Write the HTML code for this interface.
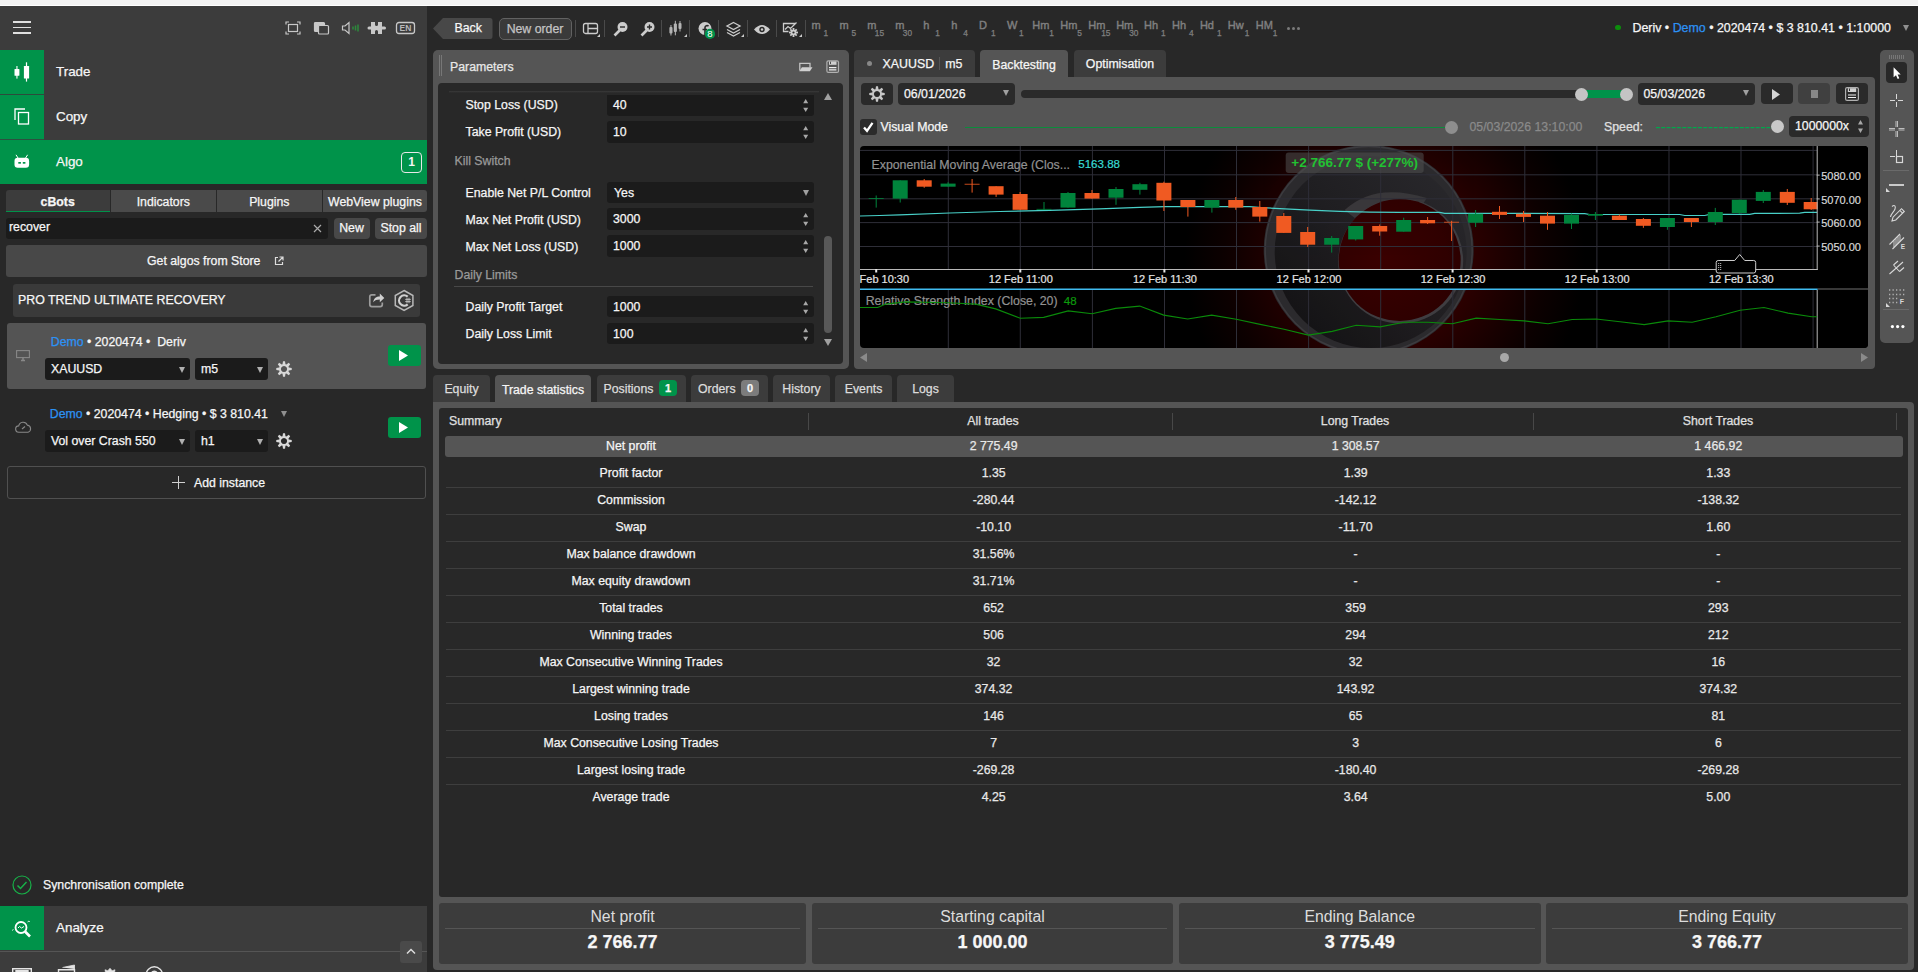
<!DOCTYPE html><html><head><meta charset="utf-8"><title>cTrader</title><style>
*{box-sizing:border-box;margin:0;padding:0}
html,body{width:1918px;height:972px;overflow:hidden;background:#282828}
body{position:relative;font-family:"Liberation Sans",Arial,sans-serif;font-size:12px;color:#f6f6f6;-webkit-font-smoothing:antialiased}
.a{position:absolute}
.t{position:absolute;white-space:nowrap;line-height:16px;height:16px;-webkit-text-stroke:.25px}
.c{text-align:center}
.b{font-weight:bold}
.g{color:#9a9a9a}
.blue{color:#2c92f4}
svg{position:absolute;overflow:visible}
.inp{position:absolute;background:#1b1b1b;border-radius:3px}
.btn{position:absolute;background:#3c3c3c;border-radius:3px}
.row{position:absolute;left:445px;width:1455px;height:27px;border-bottom:1px solid #404040}
</style></head><body>
<div class="a" style="left:0px;top:0px;width:1918px;height:5px;background:#f3f3f3;"></div>
<div class="a" style="left:0px;top:5px;width:1918px;height:1px;background:#ffffff;"></div>
<div class="a" style="left:0px;top:6px;width:427px;height:178px;background:#3c3c3c;"></div>
<div class="a" style="left:13px;top:21.25px;width:18px;height:1.5px;background:#e0e0e0;"></div>
<div class="a" style="left:13px;top:26.75px;width:18px;height:1.5px;background:#e0e0e0;"></div>
<div class="a" style="left:13px;top:32.25px;width:18px;height:1.5px;background:#e0e0e0;"></div>
<svg style="left:285px;top:21px" width="132" height="14" viewBox="0 0 132 14" fill="none" stroke="#c8c8c8" stroke-width="1.2">
<rect x="3.5" y="3.5" width="9" height="7"/><path d="M1 3.5V1h3M12 1h3v2.5M1 10.500V13h3M12 13h3v-2.500"/>
<rect x="29.500" y="1.500" width="10" height="9" rx="1" fill="#c8c8c8"/><rect x="33.500" y="4.500" width="10" height="8.500" rx="1" fill="#3c3c3c"/>
<path d="M57.500 5v4h2.500l4 3.500v-11l-4 3.500z"/>
<path d="M68 5.500v3M70.500 4.500v5M73 3.500v7" stroke="#2c8a3c" stroke-width="1.500"/>
<path d="M86 1h4v2.500a1.500 1.500 0 0 0 3 0V1h4v4.500h2.500a1.500 1.500 0 0 1 0 3H97V13h-4v-2.500a1.500 1.500 0 0 0 -3 0V13h-4V8.500h-2a1.500 1.500 0 0 1 0 -3h2z" fill="#c8c8c8" stroke="none"/>
<rect x="111.500" y="1.500" width="18" height="11" rx="2.500" stroke-width="1.300"/>
<text x="120.500" y="10.300" font-size="8.500" font-weight="bold" fill="#b8b8b8" stroke="none" text-anchor="middle" font-family="Liberation Sans, sans-serif">EN</text>
</svg>
<div class="a" style="left:0px;top:50px;width:44px;height:44px;background:#00934a;"></div>
<svg style="left:0px;top:50px" width="44" height="44" viewBox="0 50 44 44" fill="#fff"><rect x="14.500" y="69" width="4.900" height="6.700" rx=".5"/><rect x="16.400" y="66" width="1.100" height="12.600"/><rect x="23.900" y="66" width="5.200" height="12.600" rx=".5"/><rect x="25.900" y="62.300" width="1.200" height="19.300"/></svg>
<div class="t " style="left:56px;top:63.8px;font-size:13.400px">Trade</div>
<div class="a" style="left:0px;top:94px;width:44px;height:1px;background:#2d4a3c;"></div>
<div class="a" style="left:0px;top:95px;width:44px;height:44px;background:#00934a;"></div>
<svg style="left:14px;top:108px" width="16" height="17" viewBox="0 0 16 17" fill="none" stroke="#fff" stroke-width="1.300"><rect x="4.500" y="4.500" width="10" height="11.500"/><path d="M1 12V1h10"/></svg>
<div class="t " style="left:56px;top:108.8px;font-size:13.400px">Copy</div>
<div class="a" style="left:0px;top:139px;width:44px;height:1px;background:#2d5040;"></div>
<div class="a" style="left:0px;top:140px;width:427px;height:44px;background:#00934a;"></div>
<svg style="left:0px;top:140px" width="44" height="44" viewBox="0 140 44 44" fill="#fff"><rect x="14.500" y="157.800" width="14.600" height="9.900" rx="3.200"/><path d="M16 154.800l2 3.200M27.600 154.800l-2 3.200" stroke="#fff" stroke-width="1" fill="none"/><rect x="18.300" y="162" width="2.600" height="1.700" fill="#00934a"/><rect x="22.800" y="162" width="2.600" height="1.700" fill="#00934a"/></svg>
<div class="t " style="left:56px;top:153.8px;font-size:13.400px">Algo</div>
<div class="a c b" style="left:401px;top:152px;width:21px;height:21px;border:1.500px solid #e8e8e8;border-radius:4px;font-size:12px;line-height:18px">1</div>
<div class="a" style="left:5.5px;top:190.4px;width:104.3px;height:21.6px;background:#3c3c3c;border-radius:3px 0 0 0;"></div>
<div class="t c b" style="left:5.5px;top:193.5px;width:104.3px;font-size:12.300px;">cBots</div>
<div class="a" style="left:110.8px;top:190.4px;width:105px;height:21.6px;background:#4a4a4a;border-radius:0;"></div>
<div class="t c" style="left:110.8px;top:193.5px;width:105px;font-size:12.300px;">Indicators</div>
<div class="a" style="left:216.8px;top:190.4px;width:105px;height:21.6px;background:#4a4a4a;border-radius:0;"></div>
<div class="t c" style="left:216.8px;top:193.5px;width:105px;font-size:12.300px;">Plugins</div>
<div class="a" style="left:322.8px;top:190.4px;width:104.4px;height:21.6px;background:#4a4a4a;border-radius:0 3px 3px 0;"></div>
<div class="t c" style="left:322.8px;top:193.5px;width:104.4px;font-size:12.300px;">WebView plugins</div>
<div class="a" style="left:5.5px;top:210.5px;width:104px;height:1.5px;background:#00934a;"></div>
<div class="inp" style="left:6px;top:218px;width:322px;height:20.700px"></div>
<div class="t " style="left:9px;top:219px;font-size:12.300px">recover</div>
<svg style="left:313px;top:224px" width="9" height="9" viewBox="0 0 9 9" stroke="#aaa" stroke-width="1.200"><path d="M1 1l7 7M8 1l-7 7"/></svg>
<div class="btn" style="left:334px;top:217.500px;width:35.500px;height:21.500px;background:#484848;border-radius:4px"></div>
<div class="t c" style="left:334px;top:220px;width:35px;font-size:12.300px">New</div>
<div class="btn" style="left:375px;top:217.500px;width:52px;height:21.500px;background:#484848;border-radius:4px"></div>
<div class="t c" style="left:375px;top:220px;width:52px;font-size:12.300px">Stop all</div>
<div class="btn" style="left:6px;top:245px;width:421px;height:32px;background:#484848"></div>
<div class="t " style="left:147px;top:252.5px;font-size:12.300px;">Get algos from Store</div>
<svg style="left:274px;top:256px" width="10" height="10" viewBox="0 0 10 10" fill="none" stroke="#ddd" stroke-width="1.200"><path d="M4 1.500H1.500v7h7V6M5.500 1h3.500v3.500M9 1L4.500 5.500"/></svg>
<div class="btn" style="left:13px;top:284px;width:407px;height:32.500px;background:#3a3a3a"></div>
<div class="t " style="left:18px;top:291.5px;font-size:12.350px">PRO TREND ULTIMATE RECOVERY</div>
<svg style="left:360px;top:285px" width="60" height="32" viewBox="360 285 60 32" fill="none" stroke="#c8c8c8" stroke-width="1.300"><path d="M375.500 294.800H371.800a2 2 0 0 0 -2 2v7.800a2 2 0 0 0 2 2h8.500a2 2 0 0 0 2 -2V302.500" stroke="#9c9c9c" stroke-width="1.700"/><path d="M373.200 302.200c.8-4.200 3-5.800 6.600-5.800v-2.900l4.500 4.400l-4.500 4.400v-2.900c-3 0-5 .6-6.600 2.800z" fill="#d0d0d0" stroke="none"/>
<path d="M404.100 290.500l8.800 5v10l-8.800 5l-8.800-5v-10z" stroke-width="1.500" stroke="#b8b8b8"/><path d="M407.700 296.600a5.200 5.200 0 1 0 0 7.800" stroke-width="2.200" stroke="#d0d0d0"/><path d="M405.200 299.400h5.600M405.200 301.600h5.600M407 297.800v5.400M409 297.800v5.400" stroke-width=".8" stroke="#d0d0d0"/></svg>
<div class="btn" style="left:7px;top:322.500px;width:419px;height:66px;background:#545454"></div>
<svg style="left:16px;top:350px" width="14" height="11" viewBox="0 0 14 11" fill="none" stroke="#888" stroke-width="1.100"><rect x=".6" y=".6" width="12.800" height="7"/><path d="M5 10.500h4M7 7.500v3" stroke-width="1.500"/></svg>
<div class="t " style="left:50.8px;top:333.5px;font-size:12.300px"><span class="blue">Demo</span> • 2020474 •&nbsp; Deriv</div>
<div class="inp" style="left:45px;top:358px;width:145px;height:22px"></div>
<div class="t " style="left:51px;top:361.3px;font-size:12.300px">XAUUSD</div>
<svg style="left:179px;top:366.5px" width="6" height="6" viewBox="0 0 6 6"><path d="M0 0h6L3 6z" fill="#b0b0b0"/></svg>
<div class="inp" style="left:195px;top:358px;width:73px;height:22px"></div>
<div class="t " style="left:201px;top:361.3px;font-size:12.300px">m5</div>
<svg style="left:257px;top:366.5px" width="6" height="6" viewBox="0 0 6 6"><path d="M0 0h6L3 6z" fill="#b0b0b0"/></svg>
<svg style="left:276px;top:361px" width="16" height="16" viewBox="-8 -8 16 16"><path fill-rule="evenodd" fill="#d8d8d8" d="M-1.48 -4.78L-1.01 -7.73L1.01 -7.73L1.48 -4.78L2.33 -4.42L4.75 -6.18L6.18 -4.75L4.42 -2.33L4.78 -1.48L7.73 -1.01L7.73 1.01L4.78 1.48L4.42 2.33L6.18 4.75L4.75 6.18L2.33 4.42L1.48 4.78L1.01 7.73L-1.01 7.73L-1.48 4.78L-2.33 4.42L-4.75 6.18L-6.18 4.75L-4.42 2.33L-4.78 1.48L-7.73 1.01L-7.73 -1.01L-4.78 -1.48L-4.42 -2.33L-6.18 -4.75L-4.75 -6.18L-2.33 -4.42zM0 -3.100a3.100 3.100 0 1 0 .01 0z"/></svg>
<div class="a" style="left:388px;top:345px;width:33px;height:21px;background:#00934a;border-radius:3px"></div>
<svg style="left:399px;top:350px" width="9" height="11" viewBox="0 0 9 11"><path d="M0 0l9 5.500L0 11z" fill="#fff"/></svg>
<svg style="left:15px;top:422px" width="17" height="11" viewBox="0 0 17 11" fill="none" stroke="#888" stroke-width="1.100"><path d="M4 10.300a3.200 3.200 0 0 1 -.3-6.400a4.500 4.500 0 0 1 8.600-.8a3.700 3.700 0 0 1 .7 7.200z"/><path d="M7 7l3-2.500"/></svg>
<div class="t " style="left:49.8px;top:405.5px;font-size:12.300px"><span class="blue">Demo</span> • 2020474 • Hedging • $ 3 810.41</div>
<svg style="left:281px;top:411px" width="6" height="6" viewBox="0 0 6 6"><path d="M0 0h6L3 6z" fill="#909090"/></svg>
<div class="inp" style="left:45px;top:430px;width:145px;height:22px"></div>
<div class="t " style="left:51px;top:433.3px;font-size:12.300px">Vol over Crash 550</div>
<svg style="left:179px;top:438.5px" width="6" height="6" viewBox="0 0 6 6"><path d="M0 0h6L3 6z" fill="#b0b0b0"/></svg>
<div class="inp" style="left:195px;top:430px;width:73px;height:22px"></div>
<div class="t " style="left:201px;top:433.3px;font-size:12.300px">h1</div>
<svg style="left:257px;top:438.5px" width="6" height="6" viewBox="0 0 6 6"><path d="M0 0h6L3 6z" fill="#b0b0b0"/></svg>
<svg style="left:276px;top:433px" width="16" height="16" viewBox="-8 -8 16 16"><path fill-rule="evenodd" fill="#d8d8d8" d="M-1.48 -4.78L-1.01 -7.73L1.01 -7.73L1.48 -4.78L2.33 -4.42L4.75 -6.18L6.18 -4.75L4.42 -2.33L4.78 -1.48L7.73 -1.01L7.73 1.01L4.78 1.48L4.42 2.33L6.18 4.75L4.75 6.18L2.33 4.42L1.48 4.78L1.01 7.73L-1.01 7.73L-1.48 4.78L-2.33 4.42L-4.75 6.18L-6.18 4.75L-4.42 2.33L-4.78 1.48L-7.73 1.01L-7.73 -1.01L-4.78 -1.48L-4.42 -2.33L-6.18 -4.75L-4.75 -6.18L-2.33 -4.42zM0 -3.100a3.100 3.100 0 1 0 .01 0z"/></svg>
<div class="a" style="left:388px;top:417px;width:33px;height:21px;background:#00934a;border-radius:3px"></div>
<svg style="left:399px;top:422px" width="9" height="11" viewBox="0 0 9 11"><path d="M0 0l9 5.500L0 11z" fill="#fff"/></svg>
<div class="a" style="left:7px;top:466px;width:419px;height:33px;border:1px solid #505050;border-radius:3px"></div>
<svg style="left:172px;top:476px" width="13" height="13" viewBox="0 0 13 13" stroke="#d0d0d0" stroke-width="1"><path d="M6.500 0v13M0 6.500h13"/></svg>
<div class="t " style="left:194px;top:474.5px;font-size:12.300px">Add instance</div>
<svg style="left:12px;top:875px" width="20" height="20" viewBox="0 0 20 20" fill="none" stroke="#18b048" stroke-width="1.200"><circle cx="10" cy="10" r="9"/><path d="M5.500 10.500l3 3l6-6.500" stroke-width="1.500"/></svg>
<div class="t " style="left:43px;top:876.5px;font-size:12.300px">Synchronisation complete</div>
<div class="a" style="left:0px;top:906px;width:427px;height:66px;background:#3c3c3c;"></div>
<div class="a" style="left:0px;top:906px;width:44px;height:44px;background:#00934a;"></div>
<svg style="left:11px;top:920px" width="22" height="18" viewBox="0 0 22 18" fill="none" stroke="#fff" stroke-width="1.800"><circle cx="10" cy="7.500" r="5.500"/><path d="M14 11.500l5 5" stroke-width="2.600"/><path d="M7 8l1.500-1.500l2 1.500l2.500-1.500" stroke-width="1"/><path d="M1 10.500l1.500-1M16.500 2l1.500-1l.7 1" stroke-width=".8"/></svg>
<div class="t " style="left:56px;top:920px;font-size:13.400px">Analyze</div>
<div class="a" style="left:0px;top:951px;width:427px;height:1px;background:#555;"></div>
<div class="a" style="left:400px;top:941px;width:22px;height:22px;background:#4a4a4a;border-radius:3px"></div>
<svg style="left:406px;top:948px" width="10" height="6" viewBox="0 0 10 6" fill="none" stroke="#ddd" stroke-width="1.500"><path d="M1 5.500l4-4l4 4"/></svg>
<svg style="left:0px;top:960px" width="200" height="12" viewBox="0 960 200 12" fill="none" stroke="#e4e4e4" stroke-width="1.400"><path d="M12.700 973v-4.200h18.600v4.200"/><path d="M16 973v-2.300h12v2.300" fill="#e4e4e4"/><path d="M58.500 973v-3.300h16v3.300"/><path d="M62.500 967.500l12-2.500v4" fill="#e4e4e4" stroke-width=".8"/><path d="M105.500 973l-.5-3.300l2.800 1l2.200-2.500l2.200 2.500l2.800-1l-.5 3.300" fill="#e4e4e4" stroke-width=".6"/><circle cx="154.300" cy="975" r="8.200"/><circle cx="154.300" cy="974" r="2.800"/></svg>
<svg style="left:433px;top:18px" width="60" height="21" viewBox="0 0 60 21"><path d="M0 10.500L10 0h47a2.500 2.500 0 0 1 2.500 2.500v16a2.500 2.500 0 0 1 -2.500 2.500H10z" fill="#484848"/></svg>
<div class="t " style="left:454.5px;top:19.8px;font-size:12.350px">Back</div>
<div class="a" style="left:499.200px;top:17.600px;width:72.600px;height:22.200px;background:#3a3a3a;border:1.300px solid #626262;border-radius:5px"></div>
<div class="t c" style="left:499px;top:20.5px;width:72px;font-size:12.300px;color:#c4c4c4">New order</div>
<div class="a" style="left:575px;top:20px;width:1px;height:17px;background:#4a4a4a;"></div>
<div class="a" style="left:604px;top:20px;width:1px;height:17px;background:#4a4a4a;"></div>
<div class="a" style="left:661px;top:20px;width:1px;height:17px;background:#4a4a4a;"></div>
<div class="a" style="left:689px;top:20px;width:1px;height:17px;background:#4a4a4a;"></div>
<div class="a" style="left:718px;top:20px;width:1px;height:17px;background:#4a4a4a;"></div>
<div class="a" style="left:747px;top:20px;width:1px;height:17px;background:#4a4a4a;"></div>
<div class="a" style="left:776px;top:20px;width:1px;height:17px;background:#4a4a4a;"></div>
<div class="a" style="left:805px;top:20px;width:1px;height:17px;background:#4a4a4a;"></div>
<svg style="left:582px;top:19.800px" width="230" height="20" viewBox="0 0 230 20" fill="none" stroke="#cccccc" stroke-width="1.300">
<rect x="1.500" y="3.500" width="14" height="10" rx="2"/><path d="M6 3.500v10M6 8.500h9.500"/><path d="M18 14v3h-3z" fill="#cccccc" stroke="none"/>
<circle cx="40.500" cy="7" r="5" fill="#cccccc" stroke="none"/><path d="M37.500 10.500l-5 5" stroke-width="2.600"/><path d="M38 7h5" stroke="#282828" stroke-width="1.400"/>
<circle cx="67.500" cy="7" r="5" fill="#cccccc" stroke="none"/><path d="M64.500 10.500l-5 5" stroke-width="2.600"/><path d="M65 7h5M67.500 4.500v5" stroke="#282828" stroke-width="1.400"/>
<g fill="#cccccc" stroke="none"><g fill="#b4b4b4"><rect x="87.400" y="7" width="3.100" height="6.500" rx="1"/><rect x="88.450" y="5" width="1" height="10.500"/><rect x="91.800" y="3.500" width="3.100" height="8.500" rx="1"/><rect x="92.850" y="0.800" width="1" height="14.500"/><rect x="96.500" y="3" width="3" height="6" rx="1"/><rect x="97.500" y="1" width="1" height="10.500"/></g><path d="M105 14v3h-3z"/></g>
<circle cx="123" cy="8.500" r="6.500" fill="#cccccc" stroke="none"/><path d="M123 15v-7.500a2 2 0 0 1 3.500 -1.300M120.500 9.500h4.500" stroke="#282828" stroke-width="1.600"/>
<circle cx="128" cy="13.900" r="5.100" fill="#00934a" stroke="none"/>
<text x="128" y="17.200" font-size="9.500" fill="#fff" stroke="none" text-anchor="middle" font-family="Liberation Sans, sans-serif">8</text>
<path d="M151.500 2.500l6.500 3.500l-6.500 3.500l-6.500-3.500zM145 9.500l6.500 3.500l6.500-3.500M145 12.500l6.500 3.500l6.500-3.500"/><path d="M162 14v3h-3z" fill="#cccccc" stroke="none"/>
<path d="M172 9.500q8-9 16 0q-8 9-16 0z" fill="#cccccc" stroke="none"/><circle cx="180" cy="9.500" r="2.700" fill="#282828" stroke="none"/><circle cx="180" cy="9.500" r="1.200" fill="#cccccc" stroke="none"/>
<path d="M213 3.500h-11.500v8h5M203 9.500l3-3l2.500 2l6-6" /><g transform="translate(211.500,12.500)" fill="#cccccc" stroke="none"><rect x="-0.900" y="-4.500" width="1.800" height="2.500" transform="rotate(0)"/><rect x="-0.900" y="-4.500" width="1.800" height="2.500" transform="rotate(45)"/><rect x="-0.900" y="-4.500" width="1.800" height="2.500" transform="rotate(90)"/><rect x="-0.900" y="-4.500" width="1.800" height="2.500" transform="rotate(135)"/><rect x="-0.900" y="-4.500" width="1.800" height="2.500" transform="rotate(180)"/><rect x="-0.900" y="-4.500" width="1.800" height="2.500" transform="rotate(225)"/><rect x="-0.900" y="-4.500" width="1.800" height="2.500" transform="rotate(270)"/><rect x="-0.900" y="-4.500" width="1.800" height="2.500" transform="rotate(315)"/><circle r="2.800"/><circle r="1.100" fill="#282828"/></g><path d="M220 14v3h-3z" fill="#cccccc" stroke="none"/>
</svg>
<div class="t" style="left:811.5px;top:17.300px;color:#808080;font-size:11px;-webkit-text-stroke:.4px">m</div>
<div class="t" style="left:823.5px;top:24.500px;color:#808080;font-size:8.300px">1</div>
<div class="t" style="left:839.43px;top:17.300px;color:#808080;font-size:11px;-webkit-text-stroke:.4px">m</div>
<div class="t" style="left:851.43px;top:24.500px;color:#808080;font-size:8.300px">5</div>
<div class="t" style="left:867.36px;top:17.300px;color:#808080;font-size:11px;-webkit-text-stroke:.4px">m</div>
<div class="t" style="left:874.86px;top:24.500px;color:#808080;font-size:8.300px">15</div>
<div class="t" style="left:895.29px;top:17.300px;color:#808080;font-size:11px;-webkit-text-stroke:.4px">m</div>
<div class="t" style="left:902.79px;top:24.500px;color:#808080;font-size:8.300px">30</div>
<div class="t" style="left:923.22px;top:17.300px;color:#808080;font-size:11px;-webkit-text-stroke:.4px">h</div>
<div class="t" style="left:935.22px;top:24.500px;color:#808080;font-size:8.300px">1</div>
<div class="t" style="left:951.15px;top:17.300px;color:#808080;font-size:11px;-webkit-text-stroke:.4px">h</div>
<div class="t" style="left:963.15px;top:24.500px;color:#808080;font-size:8.300px">4</div>
<div class="t" style="left:979.0799999999999px;top:17.300px;color:#808080;font-size:11px;-webkit-text-stroke:.4px">D</div>
<div class="t" style="left:991.0799999999999px;top:24.500px;color:#808080;font-size:8.300px">1</div>
<div class="t" style="left:1007.01px;top:17.300px;color:#808080;font-size:11px;-webkit-text-stroke:.4px">W</div>
<div class="t" style="left:1019.01px;top:24.500px;color:#808080;font-size:8.300px">1</div>
<div class="t" style="left:1032.3400000000001px;top:17.300px;color:#808080;font-size:11px;-webkit-text-stroke:.4px">Hm</div>
<div class="t" style="left:1049.3400000000001px;top:24.500px;color:#808080;font-size:8.300px">1</div>
<div class="t" style="left:1060.27px;top:17.300px;color:#808080;font-size:11px;-webkit-text-stroke:.4px">Hm</div>
<div class="t" style="left:1077.27px;top:24.500px;color:#808080;font-size:8.300px">5</div>
<div class="t" style="left:1088.2px;top:17.300px;color:#808080;font-size:11px;-webkit-text-stroke:.4px">Hm</div>
<div class="t" style="left:1101.2px;top:24.500px;color:#808080;font-size:8.300px">15</div>
<div class="t" style="left:1116.13px;top:17.300px;color:#808080;font-size:11px;-webkit-text-stroke:.4px">Hm</div>
<div class="t" style="left:1129.13px;top:24.500px;color:#808080;font-size:8.300px">30</div>
<div class="t" style="left:1144.06px;top:17.300px;color:#808080;font-size:11px;-webkit-text-stroke:.4px">Hh</div>
<div class="t" style="left:1161.06px;top:24.500px;color:#808080;font-size:8.300px">1</div>
<div class="t" style="left:1171.99px;top:17.300px;color:#808080;font-size:11px;-webkit-text-stroke:.4px">Hh</div>
<div class="t" style="left:1188.99px;top:24.500px;color:#808080;font-size:8.300px">4</div>
<div class="t" style="left:1199.92px;top:17.300px;color:#808080;font-size:11px;-webkit-text-stroke:.4px">Hd</div>
<div class="t" style="left:1216.92px;top:24.500px;color:#808080;font-size:8.300px">1</div>
<div class="t" style="left:1227.8500000000001px;top:17.300px;color:#808080;font-size:11px;-webkit-text-stroke:.4px">Hw</div>
<div class="t" style="left:1244.8500000000001px;top:24.500px;color:#808080;font-size:8.300px">1</div>
<div class="t" style="left:1255.7800000000002px;top:17.300px;color:#808080;font-size:11px;-webkit-text-stroke:.4px">HM</div>
<div class="t" style="left:1272.7800000000002px;top:24.500px;color:#808080;font-size:8.300px">1</div>
<div class="a" style="left:1287px;top:27px;width:2.5px;height:2.5px;background:#7a7a7a;border-radius:2px;"></div>
<div class="a" style="left:1292px;top:27px;width:2.5px;height:2.5px;background:#7a7a7a;border-radius:2px;"></div>
<div class="a" style="left:1297px;top:27px;width:2.5px;height:2.5px;background:#7a7a7a;border-radius:2px;"></div>
<div class="a" style="left:1615.3px;top:24.5px;width:5.8px;height:5.8px;background:#0c8c0c;border-radius:3px;"></div>
<div class="t " style="left:1632.5px;top:20px;font-size:12.400px">Deriv • <span class="blue">Demo</span> • 2020474 • $ 3 810.41 • 1:10000</div>
<svg style="left:1903px;top:25px" width="6" height="6" viewBox="0 0 6 6"><path d="M0 0h6L3 6z" fill="#909090"/></svg>
<div class="a" style="left:433px;top:50px;width:416px;height:319px;background:#555;border-radius:5px;"></div>
<div class="a" style="left:438.3px;top:82.6px;width:404.7px;height:281.4px;background:#282828;border-radius:4px;"></div>
<div class="a" style="left:439px;top:55px;width:1px;height:21px;background:#777;"></div>
<div class="a" style="left:441px;top:55px;width:1px;height:21px;background:#777;"></div>
<div class="t " style="left:450px;top:58.5px;font-size:12.300px;color:#e8e8e8">Parameters</div>
<svg style="left:790px;top:55px" width="55" height="22" viewBox="790 55 55 22" fill="none" stroke="#c4c4c4" stroke-width="1.300"><path d="M799.800 70.500V63.400h10.200v4"/><path d="M799.300 71.300l2.600-4.100h10.600l-2.600 4.100z" fill="#d0d0d0" stroke="none"/>
<rect x="826.900" y="60.800" width="11.600" height="11.600" rx="1.500" stroke="#b0b0b0" stroke-width="1.200"/><rect x="829" y="61.400" width="7.500" height="3.400" fill="#d0d0d0" stroke="none"/><rect x="830" y="61.700" width=".9" height="2.300" fill="#444" stroke="none"/><path d="M829 67.600h7.400M829 69.900h7.400" stroke="#ececec" stroke-width="1.100"/></svg>
<div class="a" style="left:449px;top:91px;width:370px;height:2px;background:linear-gradient(#3a3a3a,#282828)"></div>
<div class="t " style="left:465.5px;top:96.5px;font-size:12.300px">Stop Loss (USD)</div>
<div class="inp" style="left:607px;top:94.5px;width:207px;height:21.0px;border-radius:0 0 3px 3px;"></div>
<div class="t " style="left:613px;top:97.25px;font-size:12.300px">40</div>
<svg style="left:802.8px;top:99.05px" width="5.400" height="13" viewBox="0 0 5 13" fill="#a8a8a8"><path d="M0 4.300h5L2.500 0zM0 8.700h5L2.500 13z"/></svg>
<div class="t " style="left:465.5px;top:123.5px;font-size:12.300px">Take Profit (USD)</div>
<div class="inp" style="left:607px;top:121px;width:207px;height:21.5px;"></div>
<div class="t " style="left:613px;top:124.25px;font-size:12.300px">10</div>
<svg style="left:802.8px;top:126.05px" width="5.400" height="13" viewBox="0 0 5 13" fill="#a8a8a8"><path d="M0 4.300h5L2.500 0zM0 8.700h5L2.500 13z"/></svg>
<div class="t g" style="left:454.5px;top:152.5px;font-size:12.300px">Kill Switch</div>
<div class="t " style="left:465.5px;top:184.5px;font-size:12.300px">Enable Net P/L Control</div>
<div class="inp" style="left:607px;top:182px;width:207px;height:21px"></div>
<div class="t " style="left:614px;top:184.5px;font-size:12.300px">Yes</div>
<svg style="left:803px;top:189.5px" width="6" height="6" viewBox="0 0 6 6"><path d="M0 0h6L3 6z" fill="#a0a0a0"/></svg>
<div class="t " style="left:465.5px;top:211.5px;font-size:12.300px">Max Net Profit (USD)</div>
<div class="inp" style="left:607px;top:208px;width:207px;height:21.5px;"></div>
<div class="t " style="left:613px;top:211.25px;font-size:12.300px">3000</div>
<svg style="left:802.8px;top:213.05px" width="5.400" height="13" viewBox="0 0 5 13" fill="#a8a8a8"><path d="M0 4.300h5L2.500 0zM0 8.700h5L2.500 13z"/></svg>
<div class="t " style="left:465.5px;top:238.5px;font-size:12.300px">Max Net Loss (USD)</div>
<div class="inp" style="left:607px;top:235px;width:207px;height:21.5px;"></div>
<div class="t " style="left:613px;top:238.25px;font-size:12.300px">1000</div>
<svg style="left:802.8px;top:240.05px" width="5.400" height="13" viewBox="0 0 5 13" fill="#a8a8a8"><path d="M0 4.300h5L2.500 0zM0 8.700h5L2.500 13z"/></svg>
<div class="t g" style="left:454.5px;top:266.5px;font-size:12.300px">Daily Limits</div>
<div class="a" style="left:454px;top:286px;width:359px;height:1px;background:#484848;"></div>
<div class="t " style="left:465.5px;top:298.5px;font-size:12.300px">Daily Profit Target</div>
<div class="inp" style="left:607px;top:296px;width:207px;height:21px;"></div>
<div class="t " style="left:613px;top:299.0px;font-size:12.300px">1000</div>
<svg style="left:802.8px;top:300.8px" width="5.400" height="13" viewBox="0 0 5 13" fill="#a8a8a8"><path d="M0 4.300h5L2.500 0zM0 8.700h5L2.500 13z"/></svg>
<div class="t " style="left:465.5px;top:325.5px;font-size:12.300px">Daily Loss Limit</div>
<div class="inp" style="left:607px;top:323px;width:207px;height:21px;"></div>
<div class="t " style="left:613px;top:326.0px;font-size:12.300px">100</div>
<svg style="left:802.8px;top:327.8px" width="5.400" height="13" viewBox="0 0 5 13" fill="#a8a8a8"><path d="M0 4.300h5L2.500 0zM0 8.700h5L2.500 13z"/></svg>
<svg style="left:824px;top:93px" width="8" height="7" viewBox="0 0 8 7"><path d="M0 7h8L4 0z" fill="#a0a0a0"/></svg>
<svg style="left:824px;top:339px" width="8" height="7" viewBox="0 0 8 7"><path d="M0 0h8L4 7z" fill="#a0a0a0"/></svg>
<div class="a" style="left:824px;top:235.5px;width:8px;height:97px;background:#585858;border-radius:4px;"></div>
<div class="a" style="left:854px;top:50px;width:121px;height:28px;background:#3c3c3c;border-radius:4px 4px 0 0;"></div>
<div class="a" style="left:867px;top:61px;width:5px;height:5px;background:#888;border-radius:3px;"></div>
<div class="t " style="left:882.5px;top:55.5px;font-size:12.400px">XAUUSD</div>
<div class="a" style="left:939px;top:57px;width:1px;height:13px;background:#555;"></div>
<div class="t " style="left:945.3px;top:55.5px;font-size:12.400px">m5</div>
<div class="a" style="left:980px;top:50px;width:88px;height:28px;background:#555;border-radius:4px 4px 0 0;"></div>
<div class="t c" style="left:980px;top:56.5px;width:88px;font-size:12.300px">Backtesting</div>
<div class="a" style="left:1074px;top:50px;width:92px;height:28px;background:#3c3c3c;border-radius:4px 4px 0 0;"></div>
<div class="t c" style="left:1074px;top:55.5px;width:92px;font-size:12.300px">Optimisation</div>
<div class="a" style="left:854px;top:77px;width:1021px;height:292px;background:#555;border-radius:0 4px 4px 4px;"></div>
<div class="btn" style="left:860.500px;top:83.300px;width:32.300px;height:21.300px;background:#2a2a2a;border-radius:4px"></div>
<svg style="left:868.5px;top:86px" width="16" height="16" viewBox="-8 -8 16 16"><path fill-rule="evenodd" fill="#c8c8c8" d="M-1.48 -4.78L-1.01 -7.73L1.01 -7.73L1.48 -4.78L2.33 -4.42L4.75 -6.18L6.18 -4.75L4.42 -2.33L4.78 -1.48L7.73 -1.01L7.73 1.01L4.78 1.48L4.42 2.33L6.18 4.75L4.75 6.18L2.33 4.42L1.48 4.78L1.01 7.73L-1.01 7.73L-1.48 4.78L-2.33 4.42L-4.75 6.18L-6.18 4.75L-4.42 2.33L-4.78 1.48L-7.73 1.01L-7.73 -1.01L-4.78 -1.48L-4.42 -2.33L-6.18 -4.75L-4.75 -6.18L-2.33 -4.42zM0 -3.100a3.100 3.100 0 1 0 .01 0z"/></svg>
<div class="inp" style="left:898px;top:83.300px;width:117px;height:21.400px;background:#2a2a2a;border-radius:4px"></div>
<div class="t " style="left:904px;top:85.5px;font-size:12.300px">06/01/2026</div>
<svg style="left:1003px;top:90px" width="6" height="6" viewBox="0 0 6 6"><path d="M0 0h6L3 6z" fill="#a0a0a0"/></svg>
<div class="a" style="left:1021px;top:89.8px;width:610px;height:8px;background:#2a2a2a;border-radius:4px;"></div>
<div class="a" style="left:1581px;top:89.8px;width:45px;height:8px;background:#00934a;"></div>
<div class="a" style="left:1574.5px;top:88px;width:13px;height:13px;background:#c4c4c4;border-radius:7px;"></div>
<div class="a" style="left:1619.5px;top:88px;width:13px;height:13px;background:#c4c4c4;border-radius:7px;"></div>
<div class="inp" style="left:1638px;top:83.300px;width:117px;height:21.400px;background:#2a2a2a;border-radius:4px"></div>
<div class="t " style="left:1643.5px;top:85.5px;font-size:12.300px">05/03/2026</div>
<svg style="left:1743px;top:90px" width="6" height="6" viewBox="0 0 6 6"><path d="M0 0h6L3 6z" fill="#a0a0a0"/></svg>
<div class="btn" style="left:1760.700px;top:83px;width:32px;height:21.300px;background:#2a2a2a;border-radius:4px"></div>
<svg style="left:1772px;top:88.500px" width="9" height="11" viewBox="0 0 9 11"><path d="M0 0l8 5.500L0 11z" fill="#d4d4d4"/></svg>
<div class="btn" style="left:1798.400px;top:83px;width:32px;height:21.300px;background:#404040;border-radius:4px"></div>
<div class="a" style="left:1811px;top:90px;width:7.2px;height:8px;background:#888;"></div>
<div class="btn" style="left:1836.200px;top:83px;width:32px;height:21.300px;background:#2a2a2a;border-radius:4px"></div>
<svg style="left:1845px;top:87.300px" width="14" height="14" viewBox="0 0 14 14" fill="none" stroke="#b0b0b0" stroke-width="1.200"><rect x=".6" y=".6" width="12.800" height="12.800" rx="1.500"/><rect x="2.800" y="1.200" width="8.400" height="3.800" fill="#d0d0d0" stroke="none"/><rect x="4" y="1.600" width="1" height="2.400" fill="#333" stroke="none"/><path d="M3 8h8M3 10.500h8" stroke="#f0f0f0" stroke-width="1.100"/></svg>
<div class="btn" style="left:860.300px;top:119px;width:16.300px;height:15.500px;background:#2a2a2a"></div>
<svg style="left:863px;top:121.500px" width="11" height="10" viewBox="0 0 11 10" fill="none" stroke="#fff" stroke-width="2.300"><path d="M1 5.500l3 3.300l5.500-8"/></svg>
<div class="t " style="left:880.5px;top:119px;font-size:12.300px">Visual Mode</div>
<div class="a" style="left:965px;top:126.5px;width:487px;height:1px;background:#0c8c3c;"></div>
<div class="a" style="left:1445px;top:120.5px;width:13px;height:13px;background:#8e8e8e;border-radius:7px;"></div>
<div class="t " style="left:1469.5px;top:119px;font-size:12.300px;color:#8a8a8a">05/03/2026 13:10:00</div>
<div class="t " style="left:1604px;top:119px;font-size:12.300px;color:#e0e0e0">Speed:</div>
<svg style="left:1656px;top:125.800px" width="121" height="3" viewBox="0 0 121 3"><path d="M0 1.700h121" stroke="#00a84c" stroke-width="1.300" stroke-dasharray="3.900 1.350"/></svg>
<div class="a" style="left:1771.1px;top:120.2px;width:13px;height:13px;background:#c8c8c8;border-radius:7px;"></div>
<div class="inp" style="left:1789px;top:116.300px;width:80px;height:20.700px;background:#2a2a2a;border-radius:4px"></div>
<div class="t " style="left:1795px;top:118px;font-size:12.300px">1000000x</div>
<svg style="left:1858px;top:120px" width="5" height="13" viewBox="0 0 5 13" fill="#a8a8a8"><path d="M0 4.500h5L2.500 0zM0 8.500h5L2.500 13z"/></svg>
<svg style="left:860.3px;top:146px;overflow:hidden;border-radius:4px" width="1008.2" height="202" viewBox="860.3 146 1008.2 202"><defs><radialGradient id="glow" cx="1385" cy="258" r="200" gradientUnits="userSpaceOnUse"><stop offset="0" stop-color="#3a0000"/><stop offset=".45" stop-color="#2a0000"/><stop offset=".8" stop-color="#0c0000"/><stop offset="1" stop-color="#000"/></radialGradient><linearGradient id="ring" x1="1" y1="0" x2="0" y2="1"><stop offset="0" stop-color="#2c2c30"/><stop offset=".5" stop-color="#202023"/><stop offset="1" stop-color="#101012"/></linearGradient></defs><rect x="860.3" y="146" width="1008.2" height="202" fill="#000"/><rect x="1150" y="146" width="480" height="202" fill="url(#glow)"/><g opacity=".96"><circle cx="1369" cy="250" r="105" fill="#2c2c2f"/><circle cx="1369" cy="250" r="103.500" fill="none" stroke="#3e3e42" stroke-width="1.500"/><circle cx="1371" cy="252" r="96" fill="url(#ring)"/><path d="M1345 210q30 -28 82 -12l-6 10q-40 -8 -66 10z" fill="#3a3a3d"/><circle cx="1401" cy="261" r="62.500" fill="#404044"/><circle cx="1400" cy="260" r="61" fill="url(#glow)"/></g><rect x="948.1" y="146" width="1" height="202" fill="#2e2e38"/><rect x="1020.1" y="146" width="1" height="202" fill="#2e2e38"/><rect x="1092.2" y="146" width="1" height="202" fill="#2e2e38"/><rect x="1164.3" y="146" width="1" height="202" fill="#2e2e38"/><rect x="1236.3" y="146" width="1" height="202" fill="#2e2e38"/><rect x="1308.4" y="146" width="1" height="202" fill="#2e2e38"/><rect x="1380.5" y="146" width="1" height="202" fill="#2e2e38"/><rect x="1452.6" y="146" width="1" height="202" fill="#2e2e38"/><rect x="1524.6" y="146" width="1" height="202" fill="#2e2e38"/><rect x="1596.7" y="146" width="1" height="202" fill="#2e2e38"/><rect x="1668.8" y="146" width="1" height="202" fill="#2e2e38"/><rect x="1740.8" y="146" width="1" height="202" fill="#2e2e38"/><rect x="1812.9" y="146" width="1" height="202" fill="#2e2e38"/><rect x="860.3" y="149.9" width="957.2" height="1" fill="#2e2e38"/><rect x="860.3" y="174.3" width="957.2" height="1" fill="#2e2e38"/><rect x="860.3" y="198.3" width="957.2" height="1" fill="#2e2e38"/><rect x="860.3" y="222.1" width="957.2" height="1" fill="#2e2e38"/><rect x="860.3" y="246.0" width="957.2" height="1" fill="#2e2e38"/><rect x="860.3" y="270" width="1008.2" height="19" fill="#000"/><rect x="1818" y="146" width="51" height="202" fill="#000"/><polyline fill="none" stroke="#48d0c8" stroke-width="1.200" points="860,216 880,215.5 900,214.8 950,213 1000,211.5 1050,210.3 1100,208.8 1140,207.3 1165,206.7 1250,206.7 1262,207.6 1285,208.8 1310,210.2 1340,211.4 1370,212.2 1400,212.4 1440,212.4 1445,213.3 1520,213.3 1585,213.6 1590,214.5 1680,214.5 1685,215.5 1705,215.5 1710,214.4 1750,214.4 1755,213.4 1800,213.2 1805,212.4 1817.5,212.4"/><rect x="876.0" y="195.5" width="1" height="12.1" fill="#00843c"/><rect x="869.0" y="198.2" width="15" height="0.8" fill="#00843c"/><rect x="900.0" y="180.3" width="1" height="22.2" fill="#00843c"/><rect x="893.0" y="180.3" width="15" height="18.3" fill="#00843c"/><rect x="924.0" y="179" width="1" height="8.8" fill="#f05a22"/><rect x="917.0" y="180.3" width="15" height="6.4" fill="#f05a22"/><rect x="947.9" y="182.2" width="1" height="4.5" fill="#00843c"/><rect x="940.9" y="183.6" width="15" height="3.1" fill="#00843c"/><rect x="971.9" y="179" width="1" height="13.6" fill="#f05a22"/><rect x="964.9" y="183.8" width="15" height="0.8" fill="#f05a22"/><rect x="995.9" y="186.2" width="1" height="10.7" fill="#f05a22"/><rect x="988.9" y="186.2" width="15" height="8.4" fill="#f05a22"/><rect x="1019.9" y="192" width="1" height="17.8" fill="#f05a22"/><rect x="1012.9" y="194" width="15" height="15.8" fill="#f05a22"/><rect x="1043.8" y="202" width="1" height="7.8" fill="#00843c"/><rect x="1036.8" y="208.9" width="15" height="0.8" fill="#00843c"/><rect x="1067.8" y="192" width="1" height="15.6" fill="#00843c"/><rect x="1060.8" y="193" width="15" height="14.6" fill="#00843c"/><rect x="1091.8" y="190" width="1" height="8.6" fill="#f05a22"/><rect x="1084.8" y="193" width="15" height="5.6" fill="#f05a22"/><rect x="1115.8" y="187" width="1" height="17.8" fill="#00843c"/><rect x="1108.8" y="189" width="15" height="8.7" fill="#00843c"/><rect x="1139.7" y="182.8" width="1" height="11.8" fill="#00843c"/><rect x="1132.7" y="184.2" width="15" height="5.6" fill="#00843c"/><rect x="1163.7" y="181.7" width="1" height="29.3" fill="#f05a22"/><rect x="1156.7" y="182.8" width="15" height="17.7" fill="#f05a22"/><rect x="1187.7" y="200" width="1" height="16.6" fill="#f05a22"/><rect x="1180.7" y="200" width="15" height="7.0" fill="#f05a22"/><rect x="1211.7" y="200" width="1" height="12.6" fill="#00843c"/><rect x="1204.7" y="200" width="15" height="7.6" fill="#00843c"/><rect x="1235.6" y="197" width="1" height="12.8" fill="#f05a22"/><rect x="1228.6" y="200" width="15" height="7.6" fill="#f05a22"/><rect x="1259.6" y="201" width="1" height="20.6" fill="#f05a22"/><rect x="1252.6" y="207" width="15" height="9.6" fill="#f05a22"/><rect x="1283.6" y="213" width="1" height="19.9" fill="#f05a22"/><rect x="1276.6" y="216" width="15" height="16.9" fill="#f05a22"/><rect x="1307.5" y="227" width="1" height="20.0" fill="#f05a22"/><rect x="1300.5" y="232" width="15" height="12.7" fill="#f05a22"/><rect x="1331.5" y="236" width="1" height="16.6" fill="#00843c"/><rect x="1324.5" y="238" width="15" height="6.7" fill="#00843c"/><rect x="1355.5" y="226" width="1" height="14.5" fill="#00843c"/><rect x="1348.5" y="226" width="15" height="13.4" fill="#00843c"/><rect x="1379.5" y="224.5" width="1" height="11.2" fill="#f05a22"/><rect x="1372.5" y="226" width="15" height="5.5" fill="#f05a22"/><rect x="1403.5" y="217.7" width="1" height="14.0" fill="#00843c"/><rect x="1396.5" y="220" width="15" height="11.7" fill="#00843c"/><rect x="1427.4" y="217" width="1" height="7.0" fill="#f05a22"/><rect x="1420.4" y="220" width="15" height="3.3" fill="#f05a22"/><rect x="1451.4" y="220.8" width="1" height="20.2" fill="#f05a22"/><rect x="1444.4" y="221.8" width="15" height="0.8" fill="#f05a22"/><rect x="1475.4" y="210" width="1" height="17.0" fill="#00843c"/><rect x="1468.4" y="213.8" width="15" height="8.9" fill="#00843c"/><rect x="1499.3" y="206" width="1" height="13.0" fill="#f05a22"/><rect x="1492.3" y="211.8" width="15" height="3.1" fill="#f05a22"/><rect x="1523.3" y="211" width="1" height="11.0" fill="#f05a22"/><rect x="1516.3" y="213.8" width="15" height="3.1" fill="#f05a22"/><rect x="1547.3" y="212" width="1" height="17.8" fill="#f05a22"/><rect x="1540.3" y="215.7" width="15" height="7.9" fill="#f05a22"/><rect x="1571.3" y="213.5" width="1" height="15.5" fill="#00843c"/><rect x="1564.3" y="214.9" width="15" height="8.7" fill="#00843c"/><rect x="1595.2" y="212" width="1" height="8.0" fill="#00843c"/><rect x="1588.2" y="214" width="15" height="1.7" fill="#00843c"/><rect x="1619.2" y="214.6" width="1" height="5.4" fill="#f05a22"/><rect x="1612.2" y="215.7" width="15" height="4.3" fill="#f05a22"/><rect x="1643.2" y="218" width="1" height="9.8" fill="#f05a22"/><rect x="1636.2" y="219" width="15" height="6.8" fill="#f05a22"/><rect x="1667.2" y="218" width="1" height="11.8" fill="#00843c"/><rect x="1660.2" y="218" width="15" height="9.0" fill="#00843c"/><rect x="1691.2" y="218" width="1" height="9.0" fill="#f05a22"/><rect x="1684.2" y="218" width="15" height="4.0" fill="#f05a22"/><rect x="1715.1" y="207.9" width="1" height="17.1" fill="#00843c"/><rect x="1708.1" y="212" width="15" height="10.0" fill="#00843c"/><rect x="1739.1" y="199.7" width="1" height="14.3" fill="#00843c"/><rect x="1732.1" y="199.7" width="15" height="13.3" fill="#00843c"/><rect x="1763.1" y="190" width="1" height="13.0" fill="#00843c"/><rect x="1756.1" y="191.9" width="15" height="9.0" fill="#00843c"/><rect x="1787.1" y="189" width="1" height="16.0" fill="#f05a22"/><rect x="1780.1" y="191.9" width="15" height="10.9" fill="#f05a22"/><rect x="1811.0" y="198" width="1" height="12.0" fill="#f05a22"/><rect x="1804.0" y="202" width="15" height="7.3" fill="#f05a22"/><rect x="1818" y="146" width="51" height="124" fill="#000"/><rect x="860.3" y="269" width="957.7" height="1" fill="#b8b8b8"/><rect x="1817" y="146" width="1" height="124" fill="#b8b8b8"/><rect x="1817" y="290" width="1" height="58" fill="#b8b8b8"/><rect x="860.3" y="288.500" width="957.7" height="1.500" fill="#40bcf0"/><rect x="1818" y="288.500" width="51" height="1" fill="#707070"/><rect x="875.5" y="269" width="2" height="3.500" fill="#e8e8e8"/><text x="877.0" y="283" font-size="11" fill="#e4e4e4" stroke="#e4e4e4" stroke-width=".2" text-anchor="middle" font-family="Liberation Sans, sans-serif">12 Feb 10:30</text><rect x="1019.6" y="269" width="2" height="3.500" fill="#e8e8e8"/><text x="1021.1" y="283" font-size="11" fill="#e4e4e4" stroke="#e4e4e4" stroke-width=".2" text-anchor="middle" font-family="Liberation Sans, sans-serif">12 Feb 11:00</text><rect x="1163.7" y="269" width="2" height="3.500" fill="#e8e8e8"/><text x="1165.2" y="283" font-size="11" fill="#e4e4e4" stroke="#e4e4e4" stroke-width=".2" text-anchor="middle" font-family="Liberation Sans, sans-serif">12 Feb 11:30</text><rect x="1307.8" y="269" width="2" height="3.500" fill="#e8e8e8"/><text x="1309.3" y="283" font-size="11" fill="#e4e4e4" stroke="#e4e4e4" stroke-width=".2" text-anchor="middle" font-family="Liberation Sans, sans-serif">12 Feb 12:00</text><rect x="1451.9" y="269" width="2" height="3.500" fill="#e8e8e8"/><text x="1453.4" y="283" font-size="11" fill="#e4e4e4" stroke="#e4e4e4" stroke-width=".2" text-anchor="middle" font-family="Liberation Sans, sans-serif">12 Feb 12:30</text><rect x="1596.0" y="269" width="2" height="3.500" fill="#e8e8e8"/><text x="1597.5" y="283" font-size="11" fill="#e4e4e4" stroke="#e4e4e4" stroke-width=".2" text-anchor="middle" font-family="Liberation Sans, sans-serif">12 Feb 13:00</text><rect x="1740.1" y="269" width="2" height="3.500" fill="#e8e8e8"/><text x="1741.6" y="283" font-size="11" fill="#e4e4e4" stroke="#e4e4e4" stroke-width=".2" text-anchor="middle" font-family="Liberation Sans, sans-serif">12 Feb 13:30</text><text x="1821.500" y="179.9" font-size="11" fill="#d8d8d8" stroke="#d8d8d8" stroke-width=".2" font-family="Liberation Sans, sans-serif">5080.00</text><rect x="1817" y="174.6" width="3" height="1" fill="#b8b8b8"/><text x="1821.500" y="203.7" font-size="11" fill="#d8d8d8" stroke="#d8d8d8" stroke-width=".2" font-family="Liberation Sans, sans-serif">5070.00</text><rect x="1817" y="198.4" width="3" height="1" fill="#b8b8b8"/><text x="1821.500" y="226.9" font-size="11" fill="#d8d8d8" stroke="#d8d8d8" stroke-width=".2" font-family="Liberation Sans, sans-serif">5060.00</text><rect x="1817" y="221.6" width="3" height="1" fill="#b8b8b8"/><text x="1821.500" y="250.9" font-size="11" fill="#d8d8d8" stroke="#d8d8d8" stroke-width=".2" font-family="Liberation Sans, sans-serif">5050.00</text><rect x="1817" y="245.6" width="3" height="1" fill="#b8b8b8"/><text x="871.800" y="169" font-size="12.350" fill="#929292" stroke="#929292" stroke-width=".2" font-family="Liberation Sans, sans-serif">Exponential Moving Average (Clos...</text><text x="1078.500" y="168.500" font-size="11.600" fill="#38dcd4" stroke="#38dcd4" stroke-width=".2" font-family="Liberation Sans, sans-serif">5163.88</text><text x="866" y="305.200" font-size="12.350" fill="#929292" stroke="#929292" stroke-width=".2" font-family="Liberation Sans, sans-serif">Relative Strength Index (Close, 20)</text><text x="1064" y="304.700" font-size="11.600" fill="#0c9a0c" stroke="#0c9a0c" stroke-width=".2" font-family="Liberation Sans, sans-serif">48</text><rect x="1286" y="152.500" width="138" height="20.500" rx="3" fill="#505050" fill-opacity=".55"/><text x="1355" y="167.500" font-size="13.500" font-weight="bold" fill="#22c232" text-anchor="middle" font-family="Liberation Sans, sans-serif">+2 766.77 $ (+277%)</text><polyline fill="none" stroke="#0a8a0a" stroke-width="1.100" points="860,307.5 878,307.5 886,304.1 906,301.9 948,302.7 976,304.1 996,308.9 1020.6,318.2 1044,317.4 1068.5,310.9 1092.4,313.7 1116,308.4 1140,306.1 1164,315.1 1188,319 1212,315.1 1236.5,319.3 1260.5,324.4 1284.4,329.2 1308.6,335.1 1332.5,331.4 1356.5,325.2 1380.4,326.9 1404.4,322.3 1428.5,322.3 1452.6,323.7 1476.5,318.1 1500.3,319.5 1524.5,320.9 1548.3,323.7 1572.4,319.5 1596.5,319 1620.4,321.8 1644.5,324.6 1668.4,320.9 1692.5,322.3 1716.3,316.7 1740.4,310.3 1764.3,307.5 1788.4,313.1 1812,316.7 1817.5,316.7"/><path d="M1716.500 271v-8.500a2 2 0 0 1 2 -2h16.500l5 -6l5 6h9a2 2 0 0 1 2 2v8.500a2 2 0 0 1 -2 2h-35.500a2 2 0 0 1 -2 -2z" fill="#000" stroke="#d0d0d0" stroke-width="1"/><rect x="1718.500" y="263" width="1" height="1" fill="#ccc"/><rect x="1720.500" y="263" width="1" height="1" fill="#ccc"/><rect x="1718.500" y="265" width="1" height="1" fill="#ccc"/><rect x="1720.500" y="265" width="1" height="1" fill="#ccc"/><rect x="1718.500" y="267" width="1" height="1" fill="#ccc"/><rect x="1720.500" y="267" width="1" height="1" fill="#ccc"/><rect x="1718.500" y="269" width="1" height="1" fill="#ccc"/><rect x="1720.500" y="269" width="1" height="1" fill="#ccc"/></svg>
<svg style="left:860px;top:353px" width="7" height="9" viewBox="0 0 7 9"><path d="M7 0v9L0 4.500z" fill="#8a8a8a"/></svg>
<svg style="left:1861px;top:353px" width="7" height="9" viewBox="0 0 7 9"><path d="M0 0v9l7-4.500z" fill="#8a8a8a"/></svg>
<div class="a" style="left:1500px;top:353px;width:9px;height:9px;background:#a8a8a8;border-radius:5px;"></div>
<div class="a" style="left:1880px;top:50px;width:34px;height:293px;background:#555;border-radius:5px;"></div>
<div class="a" style="left:1889px;top:55px;width:1px;height:4px;background:#777;"></div>
<div class="a" style="left:1891px;top:55px;width:1px;height:4px;background:#777;"></div>
<div class="a" style="left:1893px;top:55px;width:1px;height:4px;background:#777;"></div>
<div class="a" style="left:1895px;top:55px;width:1px;height:4px;background:#777;"></div>
<div class="a" style="left:1897px;top:55px;width:1px;height:4px;background:#777;"></div>
<div class="a" style="left:1899px;top:55px;width:1px;height:4px;background:#777;"></div>
<div class="a" style="left:1901px;top:55px;width:1px;height:4px;background:#777;"></div>
<div class="a" style="left:1903px;top:55px;width:1px;height:4px;background:#777;"></div>
<div class="a" style="left:1886px;top:62px;width:21px;height:21px;background:#282828;border-radius:4px;"></div>
<svg style="left:1880px;top:50px" width="34" height="293" viewBox="1880 50 34 293" fill="none" stroke="#d8d8d8" stroke-width="1">
<path d="M1893.600 67.200v10l2.400-2l1.700 3.700l1.600-.7l-1.700-3.600h3.100z" fill="#fff" stroke="none"/>
<path d="M1896.500 94v5M1896.500 102v5M1890 100.500h5M1898 100.500h5"/>
<path d="M1896 121v6M1897.500 121v6M1896 131v6M1897.500 131v6M1889 128.500h6M1889 130h6M1898.500 128.500h6M1898.500 130h6" stroke-width=".8"/>
<path d="M1896.500 150v6M1890 156.500h5"/><rect x="1896.500" y="156.500" width="6" height="6" stroke-width="1.200"/>
<path d="M1883 170.500h26" stroke="#6a6a6a"/>
<path d="M1889 185h15" stroke-width="1.800"/><path d="M1886 188v4h4z" fill="#d8d8d8" stroke="none"/>
<path d="M1892 206.500c2.500-2 4-.5 3 2.500c-1 3-4 4.500-4.500 8" stroke-width="1.100"/><path d="M1892 221l1-3.800l8.500-8.500l2.800 2.800l-8.500 8.500zM1899.800 210.400l2.800 2.800" stroke-width="1.100"/>
<path d="M1889.500 244.500L1900 234M1892.500 249L1904 237.500" stroke-width="1.100"/><path d="M1894 240.500v6.500M1896 238.500v7M1898 236.500v7M1900 235v6.500" stroke-width=".9"/><text x="1900.700" y="249.300" font-size="6.500" fill="#d8d8d8" stroke="none" font-weight="bold" font-family="Liberation Sans, sans-serif">E</text>
<path d="M1889.500 274L1903 262M1893.500 265l6 6.500M1893.500 265l4.500-4M1899.500 271.500l4.500-4" stroke-width="1.100"/>
<path d="M1889 290h15.500M1889 294.500h15.500M1889 298.500h9M1889 302.500h9" stroke-dasharray="1.300 2.200" stroke="#b0b0b0" stroke-width="1.300"/><text x="1899.700" y="303.600" font-size="7" fill="#d8d8d8" stroke="none" font-weight="bold" font-family="Liberation Sans, sans-serif">F</text><path d="M1886 303v4h4z" fill="#d8d8d8" stroke="none"/>
<path d="M1883 309.500h26" stroke="#6a6a6a"/>
<circle cx="1892.400" cy="326.600" r="1.600" fill="#fff" stroke="none"/><circle cx="1897.600" cy="326.600" r="1.600" fill="#fff" stroke="none"/><circle cx="1902.900" cy="326.600" r="1.600" fill="#fff" stroke="none"/>
</svg>
<div class="a" style="left:433px;top:375px;width:57px;height:27.5px;background:#3c3c3c;border-radius:4px 4px 0 0;"></div>
<div class="t c" style="left:433px;top:381px;width:57px;font-size:12.300px;color:#dcdcdc">Equity</div>
<div class="a" style="left:495px;top:375px;width:96px;height:27.5px;background:#555;border-radius:4px 4px 0 0;"></div>
<div class="t c" style="left:495px;top:381.7px;width:96px;font-size:12.300px">Trade statistics</div>
<div class="a" style="left:597px;top:375px;width:89px;height:27.5px;background:#3c3c3c;border-radius:4px 4px 0 0;"></div>
<div class="t " style="left:603.5px;top:381px;font-size:12.300px;color:#dcdcdc">Positions</div>
<div class="a" style="left:659px;top:379.9px;width:18px;height:16.3px;background:#00934a;border-radius:4px;"></div>
<div class="t c b" style="left:659px;top:380.2px;width:18px;font-size:11px">1</div>
<div class="a" style="left:691px;top:375px;width:77px;height:27.5px;background:#3c3c3c;border-radius:4px 4px 0 0;"></div>
<div class="t " style="left:698px;top:381px;font-size:12.300px;color:#dcdcdc">Orders</div>
<div class="a" style="left:741px;top:379.9px;width:18px;height:16.3px;background:#7c7c7c;border-radius:4px;"></div>
<div class="t c b" style="left:741px;top:380.2px;width:18px;font-size:11px">0</div>
<div class="a" style="left:773px;top:375px;width:57px;height:27.5px;background:#3c3c3c;border-radius:4px 4px 0 0;"></div>
<div class="t c" style="left:773px;top:381px;width:57px;font-size:12.300px;color:#dcdcdc">History</div>
<div class="a" style="left:835px;top:375px;width:57px;height:27.5px;background:#3c3c3c;border-radius:4px 4px 0 0;"></div>
<div class="t c" style="left:835px;top:381px;width:57px;font-size:12.300px;color:#dcdcdc">Events</div>
<div class="a" style="left:897px;top:375px;width:57px;height:27.5px;background:#3c3c3c;border-radius:4px 4px 0 0;"></div>
<div class="t c" style="left:897px;top:381px;width:57px;font-size:12.300px;color:#dcdcdc">Logs</div>
<div class="a" style="left:433px;top:402px;width:1481px;height:568px;background:#555;border-radius:0 4px 4px 4px;"></div>
<div class="a" style="left:438.5px;top:408px;width:1469.5px;height:488.5px;background:#282828;border-radius:3px;"></div>
<div class="t " style="left:449px;top:412.8px;font-size:12.300px;color:#e0e0e0">Summary</div>
<div class="t c" style="left:893px;top:412.8px;width:200px;font-size:12.300px;color:#e0e0e0">All trades</div>
<div class="t c" style="left:1255px;top:412.8px;width:200px;font-size:12.300px;color:#e0e0e0">Long Trades</div>
<div class="t c" style="left:1618px;top:412.8px;width:200px;font-size:12.300px;color:#e0e0e0">Short Trades</div>
<div class="a" style="left:808px;top:412.5px;width:1px;height:17px;background:#484848;"></div>
<div class="a" style="left:1171.5px;top:412.5px;width:1px;height:17px;background:#484848;"></div>
<div class="a" style="left:1533px;top:412.5px;width:1px;height:17px;background:#484848;"></div>
<div class="a" style="left:1895.5px;top:412.5px;width:1px;height:17px;background:#484848;"></div>
<div class="a" style="left:445px;top:435.5px;width:1458px;height:21.5px;background:#555;border-radius:3px;"></div>
<div class="t c" style="left:481px;top:437.5px;width:300px;font-size:12.300px;">Net profit</div>
<div class="t c" style="left:843.6px;top:437.5px;width:300px;font-size:12.300px;color:#e8e8e8;">2 775.49</div>
<div class="t c" style="left:1205.6px;top:437.5px;width:300px;font-size:12.300px;color:#e8e8e8;">1 308.57</div>
<div class="t c" style="left:1568.3px;top:437.5px;width:300px;font-size:12.300px;color:#e8e8e8;">1 466.92</div>
<div class="a" style="left:445.5px;top:486.5px;width:1455px;height:1px;background:#3e3e3e;"></div>
<div class="t c" style="left:481px;top:464.5px;width:300px;font-size:12.300px;">Profit factor</div>
<div class="t c" style="left:843.6px;top:464.5px;width:300px;font-size:12.300px;color:#e8e8e8;">1.35</div>
<div class="t c" style="left:1205.6px;top:464.5px;width:300px;font-size:12.300px;color:#e8e8e8;">1.39</div>
<div class="t c" style="left:1568.3px;top:464.5px;width:300px;font-size:12.300px;color:#e8e8e8;">1.33</div>
<div class="a" style="left:445.5px;top:513.5px;width:1455px;height:1px;background:#3e3e3e;"></div>
<div class="t c" style="left:481px;top:491.5px;width:300px;font-size:12.300px;">Commission</div>
<div class="t c" style="left:843.6px;top:491.5px;width:300px;font-size:12.300px;color:#e8e8e8;">-280.44</div>
<div class="t c" style="left:1205.6px;top:491.5px;width:300px;font-size:12.300px;color:#e8e8e8;">-142.12</div>
<div class="t c" style="left:1568.3px;top:491.5px;width:300px;font-size:12.300px;color:#e8e8e8;">-138.32</div>
<div class="a" style="left:445.5px;top:540.5px;width:1455px;height:1px;background:#3e3e3e;"></div>
<div class="t c" style="left:481px;top:518.5px;width:300px;font-size:12.300px;">Swap</div>
<div class="t c" style="left:843.6px;top:518.5px;width:300px;font-size:12.300px;color:#e8e8e8;">-10.10</div>
<div class="t c" style="left:1205.6px;top:518.5px;width:300px;font-size:12.300px;color:#e8e8e8;">-11.70</div>
<div class="t c" style="left:1568.3px;top:518.5px;width:300px;font-size:12.300px;color:#e8e8e8;">1.60</div>
<div class="a" style="left:445.5px;top:567.5px;width:1455px;height:1px;background:#3e3e3e;"></div>
<div class="t c" style="left:481px;top:545.5px;width:300px;font-size:12.300px;">Max balance drawdown</div>
<div class="t c" style="left:843.6px;top:545.5px;width:300px;font-size:12.300px;color:#e8e8e8;">31.56%</div>
<div class="t c" style="left:1205.6px;top:545.5px;width:300px;font-size:12.300px;color:#e8e8e8;">-</div>
<div class="t c" style="left:1568.3px;top:545.5px;width:300px;font-size:12.300px;color:#e8e8e8;">-</div>
<div class="a" style="left:445.5px;top:594.5px;width:1455px;height:1px;background:#3e3e3e;"></div>
<div class="t c" style="left:481px;top:572.5px;width:300px;font-size:12.300px;">Max equity drawdown</div>
<div class="t c" style="left:843.6px;top:572.5px;width:300px;font-size:12.300px;color:#e8e8e8;">31.71%</div>
<div class="t c" style="left:1205.6px;top:572.5px;width:300px;font-size:12.300px;color:#e8e8e8;">-</div>
<div class="t c" style="left:1568.3px;top:572.5px;width:300px;font-size:12.300px;color:#e8e8e8;">-</div>
<div class="a" style="left:445.5px;top:621.5px;width:1455px;height:1px;background:#3e3e3e;"></div>
<div class="t c" style="left:481px;top:599.5px;width:300px;font-size:12.300px;">Total trades</div>
<div class="t c" style="left:843.6px;top:599.5px;width:300px;font-size:12.300px;color:#e8e8e8;">652</div>
<div class="t c" style="left:1205.6px;top:599.5px;width:300px;font-size:12.300px;color:#e8e8e8;">359</div>
<div class="t c" style="left:1568.3px;top:599.5px;width:300px;font-size:12.300px;color:#e8e8e8;">293</div>
<div class="a" style="left:445.5px;top:648.5px;width:1455px;height:1px;background:#3e3e3e;"></div>
<div class="t c" style="left:481px;top:626.5px;width:300px;font-size:12.300px;">Winning trades</div>
<div class="t c" style="left:843.6px;top:626.5px;width:300px;font-size:12.300px;color:#e8e8e8;">506</div>
<div class="t c" style="left:1205.6px;top:626.5px;width:300px;font-size:12.300px;color:#e8e8e8;">294</div>
<div class="t c" style="left:1568.3px;top:626.5px;width:300px;font-size:12.300px;color:#e8e8e8;">212</div>
<div class="a" style="left:445.5px;top:675.5px;width:1455px;height:1px;background:#3e3e3e;"></div>
<div class="t c" style="left:481px;top:653.5px;width:300px;font-size:12.300px;">Max Consecutive Winning Trades</div>
<div class="t c" style="left:843.6px;top:653.5px;width:300px;font-size:12.300px;color:#e8e8e8;">32</div>
<div class="t c" style="left:1205.6px;top:653.5px;width:300px;font-size:12.300px;color:#e8e8e8;">32</div>
<div class="t c" style="left:1568.3px;top:653.5px;width:300px;font-size:12.300px;color:#e8e8e8;">16</div>
<div class="a" style="left:445.5px;top:702.5px;width:1455px;height:1px;background:#3e3e3e;"></div>
<div class="t c" style="left:481px;top:680.5px;width:300px;font-size:12.300px;">Largest winning trade</div>
<div class="t c" style="left:843.6px;top:680.5px;width:300px;font-size:12.300px;color:#e8e8e8;">374.32</div>
<div class="t c" style="left:1205.6px;top:680.5px;width:300px;font-size:12.300px;color:#e8e8e8;">143.92</div>
<div class="t c" style="left:1568.3px;top:680.5px;width:300px;font-size:12.300px;color:#e8e8e8;">374.32</div>
<div class="a" style="left:445.5px;top:729.5px;width:1455px;height:1px;background:#3e3e3e;"></div>
<div class="t c" style="left:481px;top:707.5px;width:300px;font-size:12.300px;">Losing trades</div>
<div class="t c" style="left:843.6px;top:707.5px;width:300px;font-size:12.300px;color:#e8e8e8;">146</div>
<div class="t c" style="left:1205.6px;top:707.5px;width:300px;font-size:12.300px;color:#e8e8e8;">65</div>
<div class="t c" style="left:1568.3px;top:707.5px;width:300px;font-size:12.300px;color:#e8e8e8;">81</div>
<div class="a" style="left:445.5px;top:756.5px;width:1455px;height:1px;background:#3e3e3e;"></div>
<div class="t c" style="left:481px;top:734.5px;width:300px;font-size:12.300px;">Max Consecutive Losing Trades</div>
<div class="t c" style="left:843.6px;top:734.5px;width:300px;font-size:12.300px;color:#e8e8e8;">7</div>
<div class="t c" style="left:1205.6px;top:734.5px;width:300px;font-size:12.300px;color:#e8e8e8;">3</div>
<div class="t c" style="left:1568.3px;top:734.5px;width:300px;font-size:12.300px;color:#e8e8e8;">6</div>
<div class="a" style="left:445.5px;top:783.5px;width:1455px;height:1px;background:#3e3e3e;"></div>
<div class="t c" style="left:481px;top:761.5px;width:300px;font-size:12.300px;">Largest losing trade</div>
<div class="t c" style="left:843.6px;top:761.5px;width:300px;font-size:12.300px;color:#e8e8e8;">-269.28</div>
<div class="t c" style="left:1205.6px;top:761.5px;width:300px;font-size:12.300px;color:#e8e8e8;">-180.40</div>
<div class="t c" style="left:1568.3px;top:761.5px;width:300px;font-size:12.300px;color:#e8e8e8;">-269.28</div>
<div class="t c" style="left:481px;top:788.5px;width:300px;font-size:12.300px;">Average trade</div>
<div class="t c" style="left:843.6px;top:788.5px;width:300px;font-size:12.300px;color:#e8e8e8;">4.25</div>
<div class="t c" style="left:1205.6px;top:788.5px;width:300px;font-size:12.300px;color:#e8e8e8;">3.64</div>
<div class="t c" style="left:1568.3px;top:788.5px;width:300px;font-size:12.300px;color:#e8e8e8;">5.00</div>
<div class="a" style="left:439px;top:902.5px;width:367px;height:61.5px;background:#3c3c3c;border-radius:3px;"></div>
<div class="t c" style="left:439px;top:907px;width:367px;font-size:15.800px;-webkit-text-stroke:0;line-height:20px;height:20px;color:#dcdcdc">Net profit</div>
<div class="a" style="left:445px;top:928px;width:355px;height:1px;background:#555;"></div>
<div class="t c b" style="left:439px;top:931.800px;width:367px;font-size:18px;line-height:20px;height:20px">2 766.77</div>
<div class="a" style="left:812px;top:902.5px;width:361px;height:61.5px;background:#3c3c3c;border-radius:3px;"></div>
<div class="t c" style="left:812px;top:907px;width:361px;font-size:15.800px;-webkit-text-stroke:0;line-height:20px;height:20px;color:#dcdcdc">Starting capital</div>
<div class="a" style="left:818px;top:928px;width:349px;height:1px;background:#555;"></div>
<div class="t c b" style="left:812px;top:931.800px;width:361px;font-size:18px;line-height:20px;height:20px">1 000.00</div>
<div class="a" style="left:1179px;top:902.5px;width:361.5px;height:61.5px;background:#3c3c3c;border-radius:3px;"></div>
<div class="t c" style="left:1179px;top:907px;width:361.5px;font-size:15.800px;-webkit-text-stroke:0;line-height:20px;height:20px;color:#dcdcdc">Ending Balance</div>
<div class="a" style="left:1185px;top:928px;width:349.5px;height:1px;background:#555;"></div>
<div class="t c b" style="left:1179px;top:931.800px;width:361.5px;font-size:18px;line-height:20px;height:20px">3 775.49</div>
<div class="a" style="left:1546px;top:902.5px;width:362px;height:61.5px;background:#3c3c3c;border-radius:3px;"></div>
<div class="t c" style="left:1546px;top:907px;width:362px;font-size:15.800px;-webkit-text-stroke:0;line-height:20px;height:20px;color:#dcdcdc">Ending Equity</div>
<div class="a" style="left:1552px;top:928px;width:350px;height:1px;background:#555;"></div>
<div class="t c b" style="left:1546px;top:931.800px;width:362px;font-size:18px;line-height:20px;height:20px">3 766.77</div>
</body></html>
